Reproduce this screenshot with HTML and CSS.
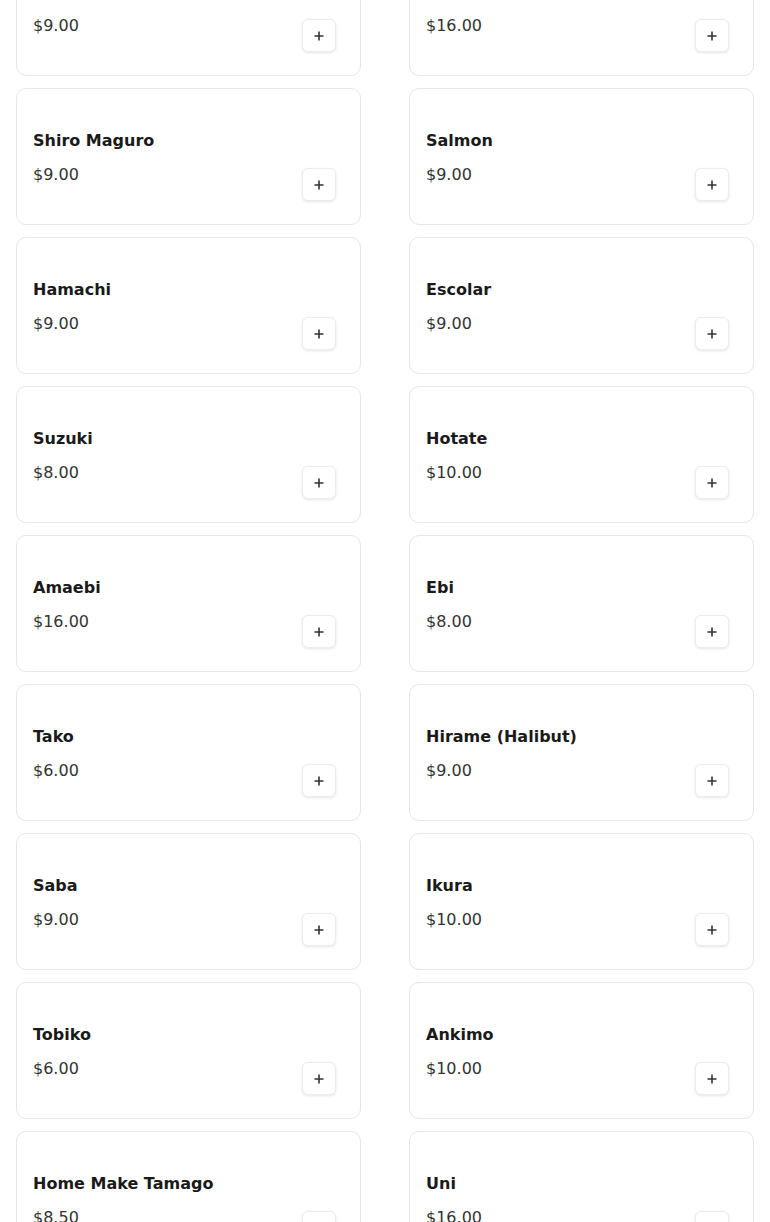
FILE: index.html
```html
<!DOCTYPE html>
<html lang="en">
<head>
<meta charset="utf-8">
<title>Menu</title>
<link rel="stylesheet" href="styles.css">
</head>
<body>
<main class="menu">
  <div class="grid">
    <div class="card"><h3 class="name">Madai (Snapper)</h3><div class="row"><span class="price">$9.00</span><button class="add" aria-label="Add"><svg viewBox="0 0 10 10" width="10" height="10"><path d="M5 0.5v9M0.5 5h9"/></svg></button></div></div>
    <div class="card"><h3 class="name">Toro</h3><div class="row"><span class="price">$16.00</span><button class="add" aria-label="Add"><svg viewBox="0 0 10 10" width="10" height="10"><path d="M5 0.5v9M0.5 5h9"/></svg></button></div></div>
    <div class="card"><h3 class="name">Shiro Maguro</h3><div class="row"><span class="price">$9.00</span><button class="add" aria-label="Add"><svg viewBox="0 0 10 10" width="10" height="10"><path d="M5 0.5v9M0.5 5h9"/></svg></button></div></div>
    <div class="card"><h3 class="name">Salmon</h3><div class="row"><span class="price">$9.00</span><button class="add" aria-label="Add"><svg viewBox="0 0 10 10" width="10" height="10"><path d="M5 0.5v9M0.5 5h9"/></svg></button></div></div>
    <div class="card"><h3 class="name">Hamachi</h3><div class="row"><span class="price">$9.00</span><button class="add" aria-label="Add"><svg viewBox="0 0 10 10" width="10" height="10"><path d="M5 0.5v9M0.5 5h9"/></svg></button></div></div>
    <div class="card"><h3 class="name">Escolar</h3><div class="row"><span class="price">$9.00</span><button class="add" aria-label="Add"><svg viewBox="0 0 10 10" width="10" height="10"><path d="M5 0.5v9M0.5 5h9"/></svg></button></div></div>
    <div class="card"><h3 class="name">Suzuki</h3><div class="row"><span class="price">$8.00</span><button class="add" aria-label="Add"><svg viewBox="0 0 10 10" width="10" height="10"><path d="M5 0.5v9M0.5 5h9"/></svg></button></div></div>
    <div class="card"><h3 class="name">Hotate</h3><div class="row"><span class="price">$10.00</span><button class="add" aria-label="Add"><svg viewBox="0 0 10 10" width="10" height="10"><path d="M5 0.5v9M0.5 5h9"/></svg></button></div></div>
    <div class="card"><h3 class="name">Amaebi</h3><div class="row"><span class="price">$16.00</span><button class="add" aria-label="Add"><svg viewBox="0 0 10 10" width="10" height="10"><path d="M5 0.5v9M0.5 5h9"/></svg></button></div></div>
    <div class="card"><h3 class="name">Ebi</h3><div class="row"><span class="price">$8.00</span><button class="add" aria-label="Add"><svg viewBox="0 0 10 10" width="10" height="10"><path d="M5 0.5v9M0.5 5h9"/></svg></button></div></div>
    <div class="card"><h3 class="name">Tako</h3><div class="row"><span class="price">$6.00</span><button class="add" aria-label="Add"><svg viewBox="0 0 10 10" width="10" height="10"><path d="M5 0.5v9M0.5 5h9"/></svg></button></div></div>
    <div class="card"><h3 class="name">Hirame (Halibut)</h3><div class="row"><span class="price">$9.00</span><button class="add" aria-label="Add"><svg viewBox="0 0 10 10" width="10" height="10"><path d="M5 0.5v9M0.5 5h9"/></svg></button></div></div>
    <div class="card"><h3 class="name">Saba</h3><div class="row"><span class="price">$9.00</span><button class="add" aria-label="Add"><svg viewBox="0 0 10 10" width="10" height="10"><path d="M5 0.5v9M0.5 5h9"/></svg></button></div></div>
    <div class="card"><h3 class="name">Ikura</h3><div class="row"><span class="price">$10.00</span><button class="add" aria-label="Add"><svg viewBox="0 0 10 10" width="10" height="10"><path d="M5 0.5v9M0.5 5h9"/></svg></button></div></div>
    <div class="card"><h3 class="name">Tobiko</h3><div class="row"><span class="price">$6.00</span><button class="add" aria-label="Add"><svg viewBox="0 0 10 10" width="10" height="10"><path d="M5 0.5v9M0.5 5h9"/></svg></button></div></div>
    <div class="card"><h3 class="name">Ankimo</h3><div class="row"><span class="price">$10.00</span><button class="add" aria-label="Add"><svg viewBox="0 0 10 10" width="10" height="10"><path d="M5 0.5v9M0.5 5h9"/></svg></button></div></div>
    <div class="card"><h3 class="name">Home Make Tamago</h3><div class="row"><span class="price">$8.50</span><button class="add" aria-label="Add"><svg viewBox="0 0 10 10" width="10" height="10"><path d="M5 0.5v9M0.5 5h9"/></svg></button></div></div>
    <div class="card"><h3 class="name">Uni</h3><div class="row"><span class="price">$16.00</span><button class="add" aria-label="Add"><svg viewBox="0 0 10 10" width="10" height="10"><path d="M5 0.5v9M0.5 5h9"/></svg></button></div></div>
  </div>
</main>
</body>
</html>
```
FILE: styles.css
```css
* { box-sizing: border-box; }
html, body {
  margin: 0;
  padding: 0;
  background: #ffffff;
  font-family: "DejaVu Sans", "Noto Sans", sans-serif;
  color: #333333;
}
.menu {
  padding: 0 16px;
  overflow: hidden;
}
.grid {
  margin-top: -61px;
  display: grid;
  grid-template-columns: 345px 345px;
  column-gap: 48px;
  row-gap: 12px;
}
.card {
  height: 137px;
  border: 1px solid #e6e6e6;
  border-radius: 10px;
  padding: 40px 16px 16px;
  background: #ffffff;
  display: flex;
  flex-direction: column;
}
.name {
  margin: 0;
  font-size: 16px;
  line-height: 24px;
  font-weight: 700;
  color: #1a1a1a;
}
.row {
  display: flex;
  justify-content: space-between;
  align-items: flex-start;
  margin-top: 10px;
}
.price {
  font-size: 16px;
  line-height: 24px;
  color: #333333;
}
.add {
  width: 34px;
  height: 33px;
  margin: 5px 8px 0 0;
  padding: 0;
  border: 1px solid #ececec;
  border-radius: 6px;
  background: #ffffff;
  box-shadow: 0 1px 3px rgba(0, 0, 0, 0.1);
  display: flex;
  align-items: center;
  justify-content: center;
  cursor: pointer;
}
.add svg path {
  stroke: #333333;
  stroke-width: 1.6;
  fill: none;
}
```
